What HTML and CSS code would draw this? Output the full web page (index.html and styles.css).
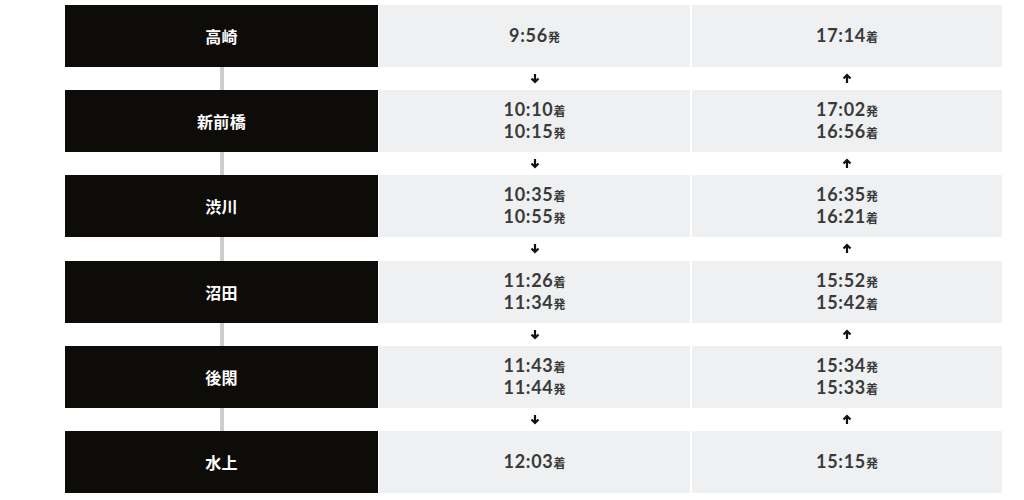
FILE: index.html
```html
<!DOCTYPE html>
<html lang="ja">
<head>
<meta charset="utf-8">
<link rel="stylesheet" href="styles.css">
</head>
<body>
<div class="timetable">
  <div class="row">
    <div class="station">高崎</div>
    <div class="time"><span class="t">9:56<small>発</small></span></div>
    <div class="time"><span class="t">17:14<small>着</small></span></div>
  </div>
  <div class="spacer"><div class="line"></div><div class="arrow"><svg viewBox="0 0 10 10"><path d="M5 0.5V8.5M1.5 5L5 8.5L8.5 5"/></svg></div><div class="arrow"><svg viewBox="0 0 10 10"><path d="M5 9.5V1.5M1.5 5L5 1.5L8.5 5"/></svg></div></div>
  <div class="row">
    <div class="station">新前橋</div>
    <div class="time"><span class="t">10:10<small>着</small></span><span class="t">10:15<small>発</small></span></div>
    <div class="time"><span class="t">17:02<small>発</small></span><span class="t">16:56<small>着</small></span></div>
  </div>
  <div class="spacer"><div class="line"></div><div class="arrow"><svg viewBox="0 0 10 10"><path d="M5 0.5V8.5M1.5 5L5 8.5L8.5 5"/></svg></div><div class="arrow"><svg viewBox="0 0 10 10"><path d="M5 9.5V1.5M1.5 5L5 1.5L8.5 5"/></svg></div></div>
  <div class="row">
    <div class="station">渋川</div>
    <div class="time"><span class="t">10:35<small>着</small></span><span class="t">10:55<small>発</small></span></div>
    <div class="time"><span class="t">16:35<small>発</small></span><span class="t">16:21<small>着</small></span></div>
  </div>
  <div class="spacer"><div class="line"></div><div class="arrow"><svg viewBox="0 0 10 10"><path d="M5 0.5V8.5M1.5 5L5 8.5L8.5 5"/></svg></div><div class="arrow"><svg viewBox="0 0 10 10"><path d="M5 9.5V1.5M1.5 5L5 1.5L8.5 5"/></svg></div></div>
  <div class="row">
    <div class="station">沼田</div>
    <div class="time"><span class="t">11:26<small>着</small></span><span class="t">11:34<small>発</small></span></div>
    <div class="time"><span class="t">15:52<small>発</small></span><span class="t">15:42<small>着</small></span></div>
  </div>
  <div class="spacer"><div class="line"></div><div class="arrow"><svg viewBox="0 0 10 10"><path d="M5 0.5V8.5M1.5 5L5 8.5L8.5 5"/></svg></div><div class="arrow"><svg viewBox="0 0 10 10"><path d="M5 9.5V1.5M1.5 5L5 1.5L8.5 5"/></svg></div></div>
  <div class="row">
    <div class="station">後閑</div>
    <div class="time"><span class="t">11:43<small>着</small></span><span class="t">11:44<small>発</small></span></div>
    <div class="time"><span class="t">15:34<small>発</small></span><span class="t">15:33<small>着</small></span></div>
  </div>
  <div class="spacer"><div class="line"></div><div class="arrow"><svg viewBox="0 0 10 10"><path d="M5 0.5V8.5M1.5 5L5 8.5L8.5 5"/></svg></div><div class="arrow"><svg viewBox="0 0 10 10"><path d="M5 9.5V1.5M1.5 5L5 1.5L8.5 5"/></svg></div></div>
  <div class="row">
    <div class="station">水上</div>
    <div class="time"><span class="t">12:03<small>着</small></span></div>
    <div class="time"><span class="t">15:15<small>発</small></span></div>
  </div>
</div>
</body>
</html>
```
FILE: styles.css
```css
html, body {
  margin: 0;
  padding: 0;
  background: #ffffff;
}
body {
  padding-top: 5px;
  font-family: Lato, "Noto Sans CJK JP", sans-serif;
}
.timetable {
  margin-left: 65px;
  width: 938px;
}
.row, .spacer {
  display: grid;
  grid-template-columns: 313px 311px 311px;
  column-gap: 1px;
}
.row .time:last-child { margin-left: 1px; }
.spacer .arrow:last-child { margin-left: 1px; }
.row {
  height: 62px;
}
.station {
  background: #0e0c09;
  color: #ffffff;
  font-family: "Noto Sans CJK JP", sans-serif;
  font-weight: 700;
  font-size: 16px;
  letter-spacing: 0.02em;
  display: flex;
  align-items: center;
  justify-content: center;
}
.time {
  background: #eef0f1;
  display: flex;
  flex-direction: column;
  align-items: center;
  justify-content: center;
  color: #3a3a3a;
}
.t {
  font-family: Lato, sans-serif;
  font-weight: 700;
  font-size: 18px;
  line-height: 21px;
  letter-spacing: 0.04em;
}
.t small {
  font-family: "Noto Sans CJK JP", sans-serif;
  font-size: 12px;
  font-weight: 700;
  letter-spacing: 0;
}
.spacer {
  height: 23.2px;
  align-items: center;
}
.line {
  width: 4px;
  height: 100%;
  background: #cdcdcd;
  justify-self: center;
}
.arrow {
  display: flex;
  justify-content: center;
  align-items: center;
}
.arrow svg {
  width: 10px;
  height: 11px;
  fill: none;
  stroke: #111111;
  stroke-width: 2.2;
}
```
